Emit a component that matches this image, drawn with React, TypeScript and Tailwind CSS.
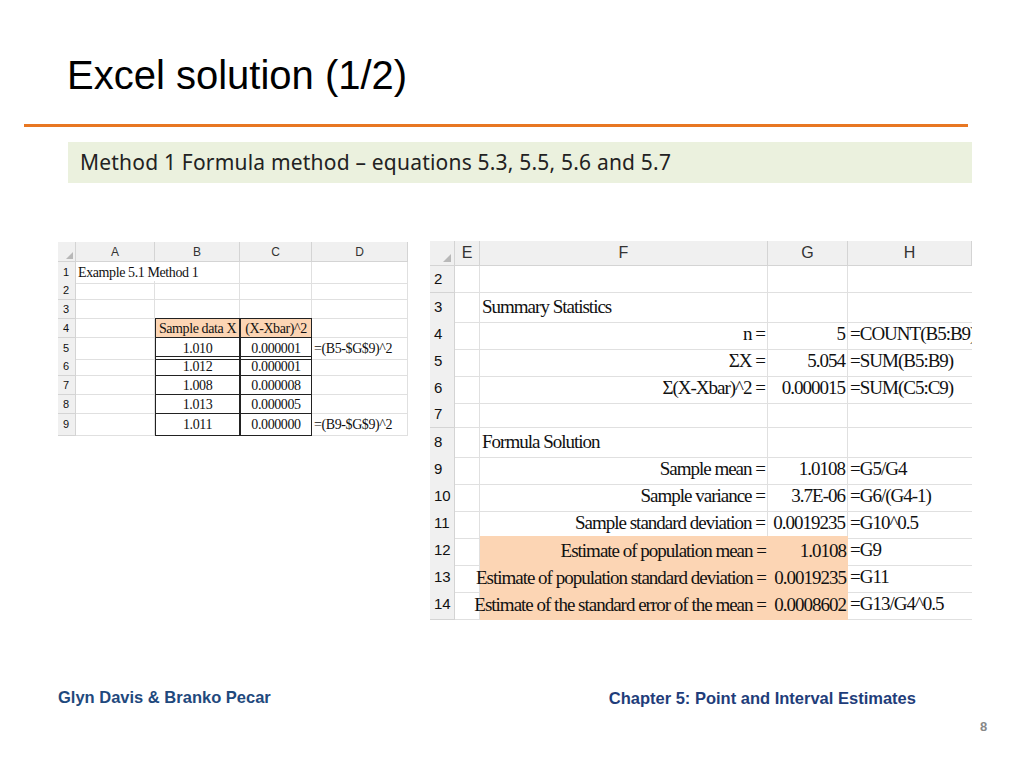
import React from 'react';

const serif = { fontFamily: '"Liberation Serif", serif' };

type Cell = { t?: string; a?: 'l' | 'c' | 'r'; hl?: boolean; box?: boolean; span?: boolean };

const LeftSheet: React.FC = () => {
  const cols = ['A', 'B', 'C', 'D'];
  const rows: Cell[][] = [
    [{ t: 'Example 5.1 Method 1', span: true }, {}, {}, {}],
    [{}, {}, {}, {}],
    [{}, {}, {}, {}],
    [{}, { t: 'Sample data X', a: 'c', hl: true, box: true }, { t: '(X-Xbar)^2', a: 'c', hl: true, box: true }, {}],
    [{}, { t: '1.010', a: 'c', box: true }, { t: '0.000001', a: 'c', box: true }, { t: '=(B5-$G$9)^2', span: true }],
    [{}, { t: '1.012', a: 'c', box: true }, { t: '0.000001', a: 'c', box: true }, {}],
    [{}, { t: '1.008', a: 'c', box: true }, { t: '0.000008', a: 'c', box: true }, {}],
    [{}, { t: '1.013', a: 'c', box: true }, { t: '0.000005', a: 'c', box: true }, {}],
    [{}, { t: '1.011', a: 'c', box: true }, { t: '0.000000', a: 'c', box: true }, { t: '=(B9-$G$9)^2', span: true }],
  ];
  const grid = 'grid grid-cols-[18px_79px_85px_72px_96px]';
  return (
    <div className="w-[350px] h-[196px] bg-white overflow-hidden">
      <div className={`${grid} h-[20px] bg-[#f0f0f0] text-[12px] text-[#333]`} style={{ fontFamily: '"Liberation Sans", sans-serif' }}>
        <div className="border-r border-b border-[#d4d4d4] relative">
          <div className="absolute right-[2px] bottom-[2px] w-0 h-0 border-l-[7px] border-l-transparent border-b-[7px] border-b-[#b8b8b8]" />
        </div>
        {cols.map(c => (
          <div key={c} className="border-r border-b border-[#d4d4d4] flex items-center justify-center">{c}</div>
        ))}
      </div>
      {rows.map((r, i) => (
        <div key={i} className={`${grid} h-[19px] text-[14px] tracking-[-0.4px] text-[#111]`}>
          <div className="bg-[#f0f0f0] border-r border-b border-[#d4d4d4] text-[11px] tracking-normal flex items-center pl-[5px]" style={{ fontFamily: '"Liberation Sans", sans-serif' }}>{i + 1}</div>
          {r.map((c, j) => (
            <div
              key={j}
              className={`flex items-center px-[2px] whitespace-nowrap ${c.span ? 'overflow-visible' : 'overflow-hidden'} ${c.a === 'c' ? 'justify-center' : 'justify-start'} ${c.hl ? 'bg-[#fcd5b4]' : ''} ${c.box ? 'border border-[#222] -mt-px' : 'border-r border-b border-[#e0e0e0]'} ${c.span && j === 0 ? 'border-r-0' : ''}`}
              style={serif}
            >
              {c.t}
            </div>
          ))}
        </div>
      ))}
    </div>
  );
};

const RightSheet: React.FC = () => {
  const rows: [string, string, string, boolean, boolean?][] = [
    ['', '', '', false],
    ['Summary Statistics', '', '', false, true],
    ['n =', '5', '=COUNT(B5:B9)', false],
    ['ΣX =', '5.054', '=SUM(B5:B9)', false],
    ['Σ(X-Xbar)^2 =', '0.000015', '=SUM(C5:C9)', false],
    ['', '', '', false],
    ['Formula Solution', '', '', false, true],
    ['Sample mean =', '1.0108', '=G5/G4', false],
    ['Sample variance =', '3.7E-06', '=G6/(G4-1)', false],
    ['Sample standard deviation =', '0.0019235', '=G10^0.5', false],
    ['Estimate of population mean =', '1.0108', '=G9', true],
    ['Estimate of population standard deviation =', '0.0019235', '=G11', true],
    ['Estimate of the standard error of the mean =', '0.0008602', '=G13/G4^0.5', true],
  ];
  const grid = 'grid grid-cols-[25px_25px_288px_80px_124px]';
  return (
    <div className="w-[542px] h-[381px] bg-white overflow-hidden">
      <div className={`${grid} h-[25px] bg-[#f0f0f0] text-[16px] text-[#333]`} style={{ fontFamily: '"Liberation Sans", sans-serif' }}>
        <div className="border-r border-b border-[#d4d4d4] relative">
          <div className="absolute right-[3px] bottom-[3px] w-0 h-0 border-l-[8px] border-l-transparent border-b-[8px] border-b-[#b8b8b8]" />
        </div>
        {['E', 'F', 'G', 'H'].map(c => (
          <div key={c} className="border-r border-b border-[#d4d4d4] flex items-center justify-center">{c}</div>
        ))}
      </div>
      {rows.map(([f, g, h, hl, left], i) => (
        <div key={i} className={`${grid} h-[27px] text-[19px] tracking-[-1px] text-[#111]`} style={serif}>
          <div className="bg-[#f0f0f0] border-r border-b border-[#d4d4d4] text-[15px] tracking-normal flex items-center pl-[4px]" style={{ fontFamily: '"Liberation Sans", sans-serif' }}>{i + 2}</div>
          <div className="border-r border-b border-[#e0e0e0]" />
          <div className={`flex items-center px-[2px] whitespace-nowrap ${left ? 'justify-start' : 'justify-end'} ${hl ? 'bg-[#fcd5b4]' : 'border-r border-b border-[#e0e0e0]'}`}>{f}</div>
          <div className={`flex items-center justify-end px-[2px] whitespace-nowrap ${hl ? 'bg-[#fcd5b4]' : 'border-r border-b border-[#e0e0e0]'}`}>{g}</div>
          <div className="flex items-center px-[2px] whitespace-nowrap border-b border-[#e0e0e0]">{h}</div>
        </div>
      ))}
    </div>
  );
};

const App: React.FC = () => {
  return (
    <div className="w-[1024px] h-[768px] bg-white relative overflow-hidden" style={{ fontFamily: '"Liberation Sans", sans-serif' }}>
      <div className="pl-[67px] pt-[50px] h-[124px] text-[40px] leading-[50px] text-black">Excel solution (1/2)</div>
      <div className="ml-[24px] w-[944px] h-[3px] bg-[#e87722]" />
      <div className="ml-[68px] mt-[15px] w-[904px] h-[41px] bg-[#ebf1de] flex items-center pl-[12px] text-[21px] tracking-[0.2px] text-[#222]" style={{ fontFamily: '"Noto Sans", sans-serif' }}>
        Method 1 Formula method – equations 5.3, 5.5, 5.6 and 5.7
      </div>
      <div className="flex items-start mt-[58px]">
        <div className="ml-[58px] mt-[1px]"><LeftSheet /></div>
        <div className="ml-[22px]"><RightSheet /></div>
      </div>
      <div className="flex mt-[63px] text-[16.5px] font-bold text-[#1f497d]">
        <div className="ml-[58px]">Glyn Davis &amp; Branko Pecar</div>
        <div className="ml-[338px] mt-[1px] text-[#1f3d7a]">Chapter 5: Point and Interval Estimates</div>
      </div>
      <div className="absolute left-[980px] top-[717px] text-[13px] font-bold text-[#888]">8</div>
    </div>
  );
};

export default App;
